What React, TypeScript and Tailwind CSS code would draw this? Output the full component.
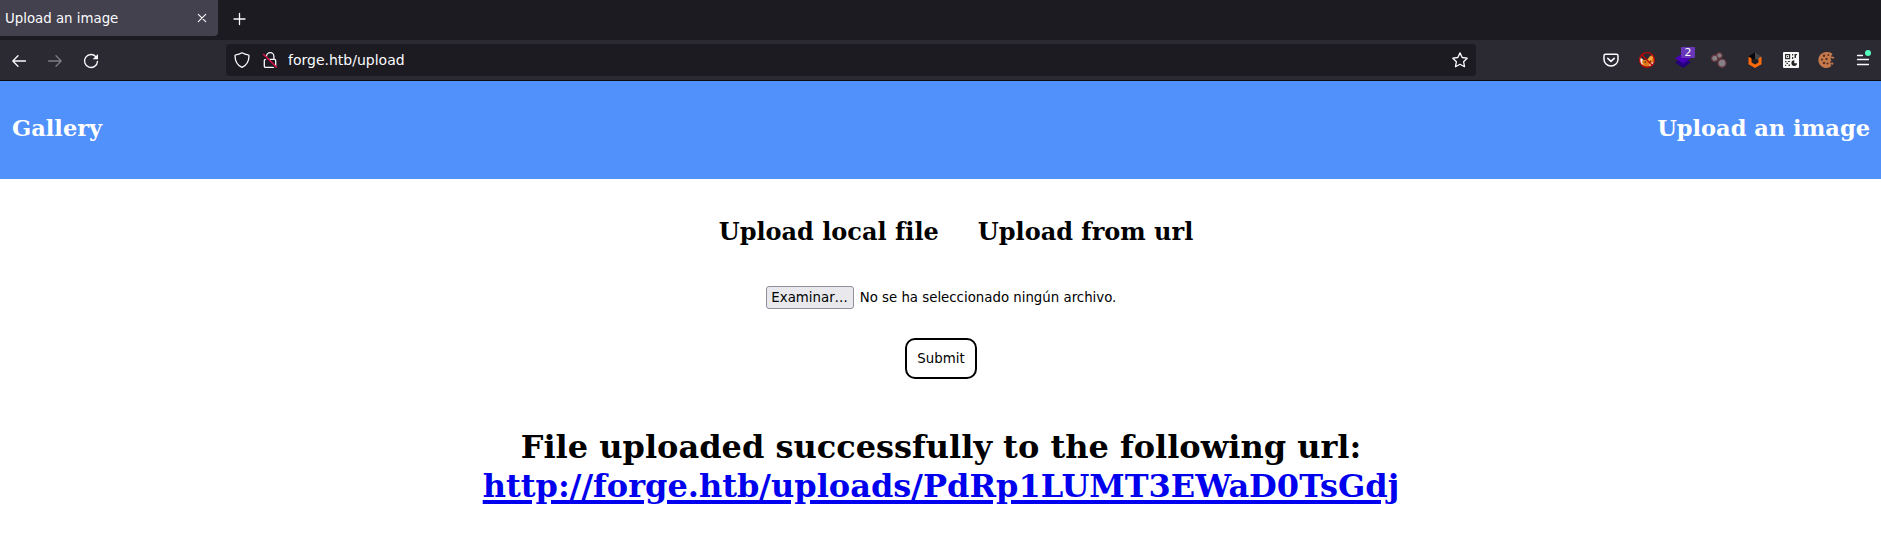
import React from "react";

const stroke = {
  fill: "none",
  stroke: "#fbfbfe",
  strokeWidth: 1.3,
  strokeLinecap: "round" as const,
  strokeLinejoin: "round" as const,
};

function Icon({ children, className = "" }: { children: React.ReactNode; className?: string }) {
  return (
    <svg viewBox="0 0 16 16" className={`block size-4 shrink-0 overflow-visible ${className}`}>
      {children}
    </svg>
  );
}

function TabBar() {
  return (
    <div className="flex h-10 items-start bg-[#1c1b22]">
      <div className="flex h-9 w-[218px] items-center justify-between rounded-br-[4px] bg-[#42414d] pr-2 pl-[5px]">
        <span className="pt-[2px] text-[13.333px] leading-4 whitespace-nowrap text-[#fbfbfe]">Upload an image</span>
        <Icon>
          <path d="M4.3 4.3l7.4 7.4M11.7 4.3l-7.4 7.4" {...stroke} strokeWidth={1.1} />
        </Icon>
      </div>
      <div className="flex h-9 items-center pt-px pl-[13px]">
        <Icon>
          <path d="M8.5 2.5v11M3 8h11" {...stroke} />
        </Icon>
      </div>
    </div>
  );
}

function NavBar() {
  return (
    <div className="flex h-[41px] items-start border-b border-[#0c0c0d] bg-[#2b2a33]">
      <div className="flex h-10 w-[226px] items-center gap-5 pt-px pl-[11px]">
        <Icon>
          <path d="M14.5 8H1.8M7 2.8L1.8 8 7 13.2" {...stroke} />
        </Icon>
        <Icon className="opacity-40">
          <path d="M1.5 8h12.7M9 2.8L14.2 8 9 13.2" {...stroke} />
        </Icon>
        <Icon>
          <path d="M12.9 3.7A6.5 6.5 0 1 0 14.5 8.4" {...stroke} />
          <path d="M15 1v5.3H9.7z" fill="#fbfbfe" />
        </Icon>
      </div>

      <div className="mt-1 flex h-8 w-[1250px] items-center rounded-[4px] bg-[#1c1b22] pr-2 pl-2">
        <Icon>
          <path
            d="M8 .8c2 1.2 4 1.9 6.2 2.1.5 0 .8.4.8.9-.1 5.4-2.3 9.6-7 11.6C3.3 13.4 1.1 9.2 1 3.8c0-.5.3-.9.8-.9C4 2.7 6 2 8 .8z"
            {...stroke}
          />
        </Icon>
        <Icon className="ml-3">
          <path d="M4.5 7V4.4a3.7 3.7 0 0 1 7.4 0V7" {...stroke} />
          <rect x="2.3" y="7.3" width="11.4" height="8" rx="1.3" {...stroke} />
          <path d="M.6 2.4l13.6 13.4" stroke="#1c1b22" strokeWidth="2.5" />
          <path d="M1.2 2l13.6 13.6" stroke="#e50f46" strokeWidth="1.4" />
        </Icon>
        <span className="ml-[10px] text-[14px] leading-5 whitespace-nowrap text-[#fbfbfe]">forge.htb/upload</span>
        <Icon className="ml-auto">
          <path d="M8 .9l2.2 4.6 5 .7-3.6 3.5.9 5-4.5-2.4-4.5 2.4.9-5L.8 6.2l5-.7z" {...stroke} />
        </Icon>
      </div>

      <div className="flex h-10 flex-1 items-center justify-end gap-5 pr-[10px]">
        <Icon>
          <path
            d="M2.500 2.200h11c.8 0 1.500.7 1.500 1.500v3.500a7 6.800 0 0 1-14 0V3.700c0-.8.700-1.500 1.500-1.500z"
            {...stroke}
            strokeWidth={1.5}
          />
          <path d="M4.800 6.300L8 9.300l3.200-3" {...stroke} strokeWidth={1.6} />
        </Icon>
        <Icon>
          <path d="M1 4.500L4 7.500 5.500 8l3-.5 2-3L14 2.500l1.500 5L14.500 12 9 14.800l-4.500-.5L1 11z" fill="#e07a1a" />
          <path d="M.8 5L4 7.800 3 10l1.500 3L2 12.200.6 9zM10.500 12.500l5-3.500-1.500 4-3.500 2z" fill="#f4e6d4" />
          <path d="M8.500 7.500l3.500-3.500 2 1-1.500 4-3 .5z" fill="#f8a63a" />
          <circle cx="6.300" cy="10" r=".8" fill="#332019" />
          <circle cx="11.300" cy="9.300" r=".8" fill="#332019" />
          <circle cx="8" cy="8" r="7.400" fill="none" stroke="#b90505" strokeWidth="1.200" />
          <path d="M2.800 2.800l10.400 10.400" stroke="#b90505" strokeWidth="1.300" />
        </Icon>
        <div className="relative">
          <Icon>
            <path d="M0 10.200l8-4.700 8 4.700-8 5.800z" fill="#24007c" />
            <path d="M0 6.200L8 1l8 5.200-8 5.300z" fill="#4a00b4" />
          </Icon>
          <span className="absolute -top-[5px] left-[6px] flex h-[11px] w-[14px] items-center justify-center rounded-[1px] bg-[#6737b7] text-[11px] leading-none text-white">
            2
          </span>
        </div>
        <Icon>
          <g fill="#868087" stroke="#69393f" strokeWidth="1.200">
            <circle cx="8.400" cy="3.500" r="2.700" />
            <circle cx="3.700" cy="6.300" r="3.100" />
            <circle cx="11" cy="11.200" r="4" />
          </g>
        </Icon>
        <Icon>
          <path d="M8 .5L1.800 4.200V9L8 7z" fill="#08080a" />
          <path d="M8 .5l6.200 3.700V9L8 7z" fill="#47474a" />
          <path d="M8 6.500l3.500 2v3L8 13l-3.500-1.500v-3z" fill="#202024" />
          <path d="M1.500 4.800l3 1.500v4.300L8 12.600l3.500-2V6.300l3-1.500v7.400L8 16l-6.500-3.800z" fill="#ff6a0a" />
        </Icon>
        <Icon>
          <rect width="16" height="16" rx="1" fill="#f8f8f8" />
          <rect x="2.600" y="2.600" width="4" height="4" fill="none" stroke="#333" strokeWidth="1.200" />
          <path
            d="M4 4h1.200v1.200H4zM9 2h1.200v1.500H9zM9 5h1.200v2H9zM11.500 2H14v1.200h-1V6h-1.500zM2 9h1.500v1.200H2zM5 9h2v1H5zM3.500 10.800H5V12H3.500zM2 12.800h1.200V14H2zM5.500 12.500H7V14H5.500z"
            fill="#333"
          />
          <path d="M11.300 8.300v2.900H14A2.800 2.800 0 1 1 11.300 8.300z" fill="#222" />
        </Icon>
        <Icon>
          <path
            d="M8 0c2.500 0 4.500.8 5.600 2.200L12 4l1.200 1.500-1.800 1.300 1 2-1.600 1.500 1.400 1.300-.6 1.600 1 .8A8 8 0 1 1 8 0z"
            fill="#c67a4c"
          />
          <g fill="#5c3122">
            <circle cx="5" cy="3.800" r="1.200" />
            <circle cx="9.300" cy="3" r="1" />
            <circle cx="3" cy="7.600" r="1.100" />
            <circle cx="7.500" cy="7" r="1.200" />
            <circle cx="5" cy="11" r="1.300" />
            <circle cx="8.500" cy="11.500" r="1.100" />
          </g>
          <path d="M13 4.500l2.500.8-1 1.500-1.800-.5zM12 10.500l2.500.2-.5 2-1.500-.3z" fill="#c67a4c" />
        </Icon>
        <div className="relative">
          <Icon>
            <path d="M2.500 3.500h5M2.500 7.500h11M2.500 12.500h11" {...stroke} />
          </Icon>
          <span className="absolute -top-[2px] left-[10px] size-[6px] rounded-full bg-[#54ffbd]" />
        </div>
      </div>
    </div>
  );
}

export default function App() {
  return (
    <div className="h-[540px] overflow-hidden bg-white font-['DejaVu_Sans',sans-serif]">
      <TabBar />
      <NavBar />

      <header className="flex h-[98px] items-center justify-between bg-[#5091fb] pr-[11px] pb-[4px] pl-3 font-['DejaVu_Serif',serif] text-[22.5px] leading-7 font-bold text-white">
        <a>Gallery</a>
        <a>Upload an image</a>
      </header>

      <main className="flex flex-col items-center text-[13.333px] leading-4 text-black">
        <div className="mt-[39px] ml-[31px] flex h-7 gap-[39px] font-['DejaVu_Serif',serif] text-[24px] leading-7 font-bold whitespace-nowrap [font-variant-ligatures:none]">
          <h2>Upload local file</h2>
          <h2>Upload from url</h2>
        </div>
        <div className="mt-[40px] ml-px flex h-[23px] items-center gap-[6px] whitespace-nowrap">
          <button className="h-[23px] w-[88px] rounded-[3px] border border-[#8f8f9d] bg-[#e9e9ed]">Examinar…</button>
          <span>No se ha seleccionado ningún archivo.</span>
        </div>
        <button className="mt-[29px] ml-px h-[41px] w-[72px] rounded-[10px] border-2 border-black bg-white">
          Submit
        </button>
        <h1 className="mt-[49px] ml-px text-center font-['DejaVu_Serif',serif] text-[32px] leading-[39px] font-bold [font-variant-ligatures:none]">
          File uploaded successfully to the following url:
          <br />
          <a className="text-[#0000ee] underline decoration-4 underline-offset-[3px]">
            http://forge.htb/uploads/PdRp1LUMT3EWaD0TsGdj
          </a>
        </h1>
      </main>
    </div>
  );
}
